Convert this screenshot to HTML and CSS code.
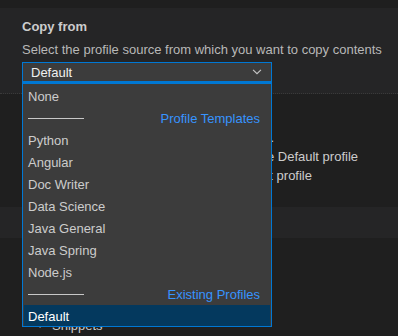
FILE: index.html
```html
<!DOCTYPE html>
<html>
<head>
<meta charset="utf-8">
<link rel="stylesheet" href="styles.css">
</head>
<body>
  <div class="page">
    <section class="panel">
      <h2 class="title">Copy from</h2>
      <p class="desc">Select the profile source from which you want to copy contents</p>
      <div class="select">
        <span class="select-value">Default</span>
        <svg class="chev" width="14" height="14" viewBox="0 0 16 16"><path d="M3.5 5.5 L8 10 L12.5 5.5" fill="none" stroke="#c5c5c5" stroke-width="1.3"/></svg>
      </div>
    </section>
    <section class="contents">
      <p class="bg-line bg-line-a">Choose the contents.</p>
      <p class="bg-line bg-line-b">Copy all contents from the Default profile</p>
      <p class="bg-line bg-line-c">Copy contents from the current profile</p>
    </section>
    <div class="band"></div>
    <div class="tree">
      <div class="tree-row">
        <svg width="10" height="10" viewBox="0 0 16 16"><path d="M6 3.5 L10.5 8 L6 12.5" fill="none" stroke="#c5c5c5" stroke-width="1.4"/></svg>
        <span>Snippets</span>
      </div>
    </div>

    <ul class="dropdown">
      <li class="opt">None</li>
      <li class="opt sep"><span class="rule"></span><span class="group">Profile Templates</span></li>
      <li class="opt">Python</li>
      <li class="opt">Angular</li>
      <li class="opt">Doc Writer</li>
      <li class="opt">Data Science</li>
      <li class="opt">Java General</li>
      <li class="opt">Java Spring</li>
      <li class="opt">Node.js</li>
      <li class="opt sep"><span class="rule"></span><span class="group">Existing Profiles</span></li>
      <li class="opt selected">Default</li>
    </ul>
  </div>
</body>
</html>
```
FILE: styles.css
```css
* { box-sizing: border-box; }
html, body {
  margin: 0;
  padding: 0;
  background: #1f1f1f;
  width: 398px;
  height: 336px;
  overflow: hidden;
  font-family: "Liberation Sans", Arial, sans-serif;
  font-size: 13px;
  color: #cccccc;
}
.page {
  position: relative;
  width: 398px;
  height: 336px;
  padding-top: 8px;
}
.panel {
  background: #252526;
  height: 86px;
  padding: 10px 0 0 22px;
  border-bottom: 1px dotted #3a3a3a;
}
.title {
  margin: 0;
  font-size: 13px;
  font-weight: bold;
  line-height: 18px;
  color: #cccccc;
}
.desc {
  margin: 5px 0 0 0;
  line-height: 18px;
  color: #b8b8b8;
}
.select {
  margin-top: 3px;
  width: 250px;
  height: 20px;
  background: #3c3c3c;
  border: 1px solid #0078d4;
  display: flex;
  align-items: center;
  justify-content: space-between;
  padding: 1px 7px 0 8px;
  color: #f0f0f0;
}
.chev { display: block; margin-top: -1px; }
.contents {
  height: 113px;
}
.bg-line {
  margin: 0;
  line-height: 18px;
  color: #cccccc;
  white-space: nowrap;
}
.bg-line-a {
  width: 274px;
  text-align: right;
  padding-top: 35px;
}
.bg-line-b {
  width: 358px;
  text-align: right;
  padding-top: 1px;
}
.bg-line-c {
  width: 312px;
  text-align: right;
  padding-top: 1px;
}
.band {
  background: #252526;
  height: 31px;
}
.tree {
  padding: 77px 0 0 36px;
}
.tree-row {
  display: flex;
  align-items: center;
  gap: 6px;
  height: 20px;
}
.dropdown {
  position: absolute;
  left: 22px;
  top: 82px;
  width: 250px;
  height: 245px;
  margin: 0;
  padding: 1px 0 0 0;
  list-style: none;
  background: #3c3c3c;
  border: 1px solid #0078d4;
  border-top-width: 2px;
  overflow: hidden;
}
.opt {
  height: 22px;
  line-height: 21px;
  padding: 1px 11px 0 5px;
  color: #cccccc;
  white-space: nowrap;
}
.sep {
  display: flex;
  align-items: center;
  justify-content: space-between;
}
.rule {
  display: block;
  width: 56px;
  height: 1px;
  background: #c8c8c8;
}
.group {
  color: #3794ff;
}
.selected {
  background: #04395e;
  color: #ffffff;
  margin: 0 1px;
  padding-left: 4px;
}
```
